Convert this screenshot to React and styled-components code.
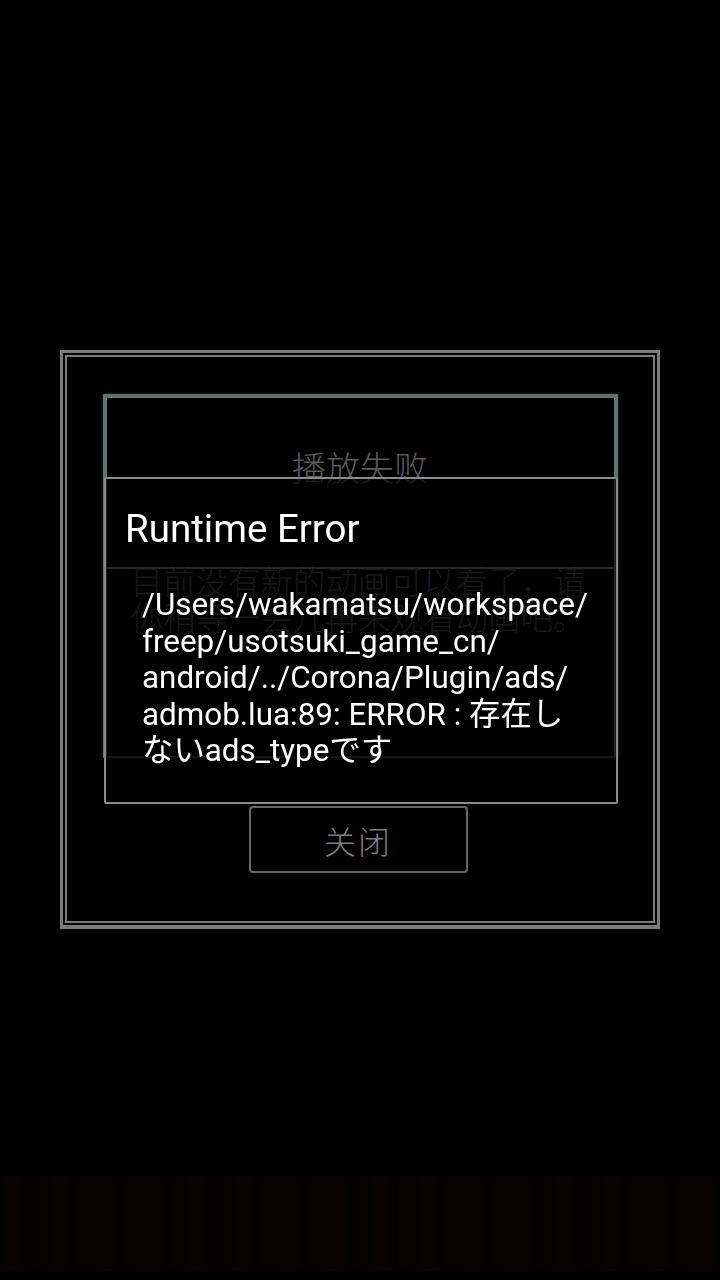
import React from "react";
import styled, { createGlobalStyle } from "styled-components";

const GlobalStyle = createGlobalStyle`
  html, body {
    margin: 0;
    padding: 0;
    background: #000;
  }
  * { box-sizing: border-box; }
`;

const Screen = styled.div`
  width: 720px;
  height: 1280px;
  background: #000;
  padding-top: 350px;
  display: flex;
  flex-direction: column;
  overflow: hidden;
`;

const Frame = styled.div`
  margin-left: 60px;
  width: 600px;
  height: 579px;
  border: 3px solid #7a7a7a;
  border-bottom-width: 4px;
  padding: 2px;
`;

const FrameInner = styled.div`
  height: 100%;
  border: 2px solid #7a7a7a;
  display: flex;
  flex-direction: column;
  align-items: center;
  padding-top: 37px;
`;

const Panel = styled.div`
  width: 515px;
  height: 364px;
  border: 4px solid #657070;
  border-bottom: 2px solid #444;
  box-shadow: 0 0 3px rgba(150, 160, 160, 0.35);
  display: flex;
  flex-direction: column;
  align-items: center;
`;

const PanelTitle = styled.div`
  margin-top: 51px;
  font-family: "Noto Sans CJK SC", sans-serif;
  font-weight: 300;
  font-size: 34px;
  line-height: 36px;
  color: #5a5a5a;
`;

const PanelText = styled.div`
  margin-top: 77px;
  width: 100%;
  padding: 0 20px 0 24px;
  font-family: "Noto Sans CJK SC", sans-serif;
  font-weight: 300;
  font-size: 32.5px;
  line-height: 36px;
  color: #4e4e4e;
  white-space: pre-line;
`;

const CloseButton = styled.div`
  margin-top: 48px;
  margin-right: 4px;
  width: 219px;
  height: 67px;
  border: 2px solid #666;
  border-radius: 4px;
  display: flex;
  align-items: center;
  justify-content: center;
  font-family: "Noto Sans CJK SC", sans-serif;
  font-weight: 300;
  font-size: 32px;
  letter-spacing: 2px;
  color: #7c7c7c;
`;

const Banner = styled.div`
  margin-top: 247px;
  height: 95px;
  background: repeating-linear-gradient(
    90deg,
    #060101 0px,
    #0a0202 14px,
    #050000 28px,
    #090101 46px
  );
`;

const Overlay = styled.div`
  position: fixed;
  top: 0;
  left: 0;
  width: 720px;
  height: 1280px;
  display: flex;
  align-items: center;
  justify-content: center;
  padding-left: 2px;
`;

const Dialog = styled.div`
  width: 514px;
  height: 327px;
  margin-top: 1px;
  background: rgba(0, 0, 0, 0.7);
  border: 2px solid #8a8a8a;
  border-radius: 2px;
  display: flex;
  flex-direction: column;
`;

const DialogTitle = styled.div`
  height: 90px;
  padding: 10px 0 0 19px;
  display: flex;
  align-items: center;
  border-bottom: 2px solid #262626;
  font-family: Roboto, "Noto Sans", sans-serif;
  font-size: 38.5px;
  color: #fff;
`;

const DialogBody = styled.div`
  padding: 18px 20px 0 36px;
  font-family: Roboto, "Noto Sans CJK JP", sans-serif;
  font-size: 31.4px;
  line-height: 36.6px;
  color: #fff;
  white-space: pre-line;
`;

export default function App() {
  return (
    <>
      <GlobalStyle />
      <Screen>
        <Frame>
          <FrameInner>
            <Panel>
              <PanelTitle>播放失败</PanelTitle>
              <PanelText>
                {"目前没有新的动画可以看了，请\n你稍等一会儿再来观看动画吧。"}
              </PanelText>
            </Panel>
            <CloseButton>关闭</CloseButton>
          </FrameInner>
        </Frame>
        <Banner />
      </Screen>
      <Overlay>
        <Dialog>
          <DialogTitle>Runtime Error</DialogTitle>
          <DialogBody>
            {"/Users/wakamatsu/workspace/\nfreep/usotsuki_game_cn/\nandroid/../Corona/Plugin/ads/\nadmob.lua:89: ERROR : 存在し\nないads_typeです"}
          </DialogBody>
        </Dialog>
      </Overlay>
    </>
  );
}
